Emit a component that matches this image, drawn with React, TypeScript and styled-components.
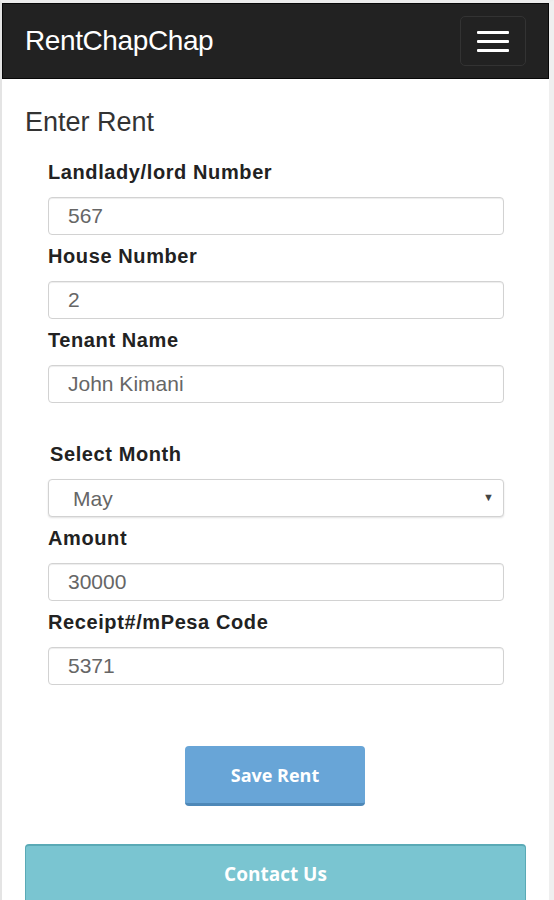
import styled, { createGlobalStyle } from "styled-components";

const GlobalStyle = createGlobalStyle`
  html, body {
    margin: 0;
    padding: 0;
    background: #ffffff;
  }
  * {
    box-sizing: border-box;
  }
`;

const fields = [
  { label: "Landlady/lord Number", value: "567" },
  { label: "House Number", value: "2" },
  { label: "Tenant Name", value: "John Kimani" },
];

const moreFields = [
  { label: "Amount", value: "30000" },
  { label: "Receipt#/mPesa Code", value: "5371" },
];

const App = () => {
  return (
    <Page>
      <GlobalStyle />
      <Navbar>
        <Brand>RentChapChap</Brand>
        <Toggle aria-label="menu">
          <Bar />
          <Bar />
          <Bar />
        </Toggle>
      </Navbar>
      <Main>
        <Heading>Enter Rent</Heading>
        <Form>
          {fields.map((f) => (
            <Field key={f.label}>
              <Label>{f.label}</Label>
              <Input defaultValue={f.value} />
            </Field>
          ))}
          <Field $spaced>
            <Label $shift>Select Month</Label>
            <SelectWrap>
              <Select defaultValue="May">
                <option>January</option>
                <option>February</option>
                <option>March</option>
                <option>April</option>
                <option>May</option>
                <option>June</option>
              </Select>
              <Arrow>▼</Arrow>
            </SelectWrap>
          </Field>
          {moreFields.map((f) => (
            <Field key={f.label}>
              <Label>{f.label}</Label>
              <Input defaultValue={f.value} />
            </Field>
          ))}
          <Actions>
            <SaveButton type="button">Save Rent</SaveButton>
          </Actions>
        </Form>
        <ContactButton type="button">Contact Us</ContactButton>
      </Main>
    </Page>
  );
};

const Page = styled.div`
  height: 900px;
  overflow: hidden;
  border-top: 3px solid #ececec;
  border-left: 2px solid #e4e4e4;
  border-right: 5px solid #efefef;
  font-family: "Liberation Sans", Arial, sans-serif;
  color: #333;
`;

const Navbar = styled.div`
  display: flex;
  align-items: center;
  justify-content: space-between;
  height: 76px;
  padding: 0 22px 0 22px;
  background: #222222;
  border: 1px solid #080808;
`;

const Brand = styled.div`
  font-size: 28px;
  color: #ffffff;
  letter-spacing: -0.4px;
`;

const Toggle = styled.button`
  display: flex;
  flex-direction: column;
  justify-content: center;
  gap: 6px;
  width: 66px;
  height: 50px;
  padding: 0 16px;
  background: transparent;
  border: 1px solid #333;
  border-radius: 5px;
`;

const Bar = styled.span`
  display: block;
  height: 3px;
  background: #ffffff;
  border-radius: 1px;
`;

const Main = styled.div`
  padding: 28px 21px 0 23px;
`;

const Heading = styled.h2`
  margin: 0 0 22px;
  font-size: 27px;
  font-weight: normal;
  color: #333;
  line-height: 30px;
`;

const Form = styled.form`
  padding: 0 24px 0 23px;
`;

const Field = styled.div<{ $spaced?: boolean }>`
  margin-top: ${(p) => (p.$spaced ? "38px" : "0")};
  margin-bottom: 8px;
`;

const Label = styled.label<{ $shift?: boolean }>`
  display: block;
  margin: 0 0 12px ${(p) => (p.$shift ? "2px" : "0")};
  font-size: 20px;
  font-weight: bold;
  letter-spacing: 0.6px;
  line-height: 26px;
  color: #222;
`;

const Input = styled.input`
  display: block;
  width: 100%;
  height: 38px;
  padding: 0 19px;
  font-family: "Liberation Sans", Arial, sans-serif;
  font-size: 21px;
  color: #666;
  background: #fff;
  border: 1px solid #d2d2d2;
  border-radius: 4px;
  box-shadow: inset 0 1px 1px rgba(0, 0, 0, 0.075);
  outline: none;
`;

const SelectWrap = styled.div`
  position: relative;
`;

const Select = styled.select`
  display: block;
  width: 100%;
  height: 38px;
  padding: 0 24px;
  font-family: "Liberation Sans", Arial, sans-serif;
  font-size: 21px;
  color: #666;
  background: #fff;
  border: 1px solid #d2d2d2;
  border-radius: 4px;
  box-shadow: 0 1px 2px rgba(0, 0, 0, 0.12);
  appearance: none;
  outline: none;
`;

const Arrow = styled.span`
  position: absolute;
  right: 10px;
  top: 12px;
  font-size: 11px;
  color: #444;
  pointer-events: none;
`;

const Actions = styled.div`
  display: flex;
  justify-content: center;
  margin-top: 61px;
`;

const SaveButton = styled.button`
  width: 180px;
  height: 60px;
  margin-left: -2px;
  font-family: "Open Sans", sans-serif;
  font-size: 18px;
  font-weight: 700;
  color: #fff;
  background: #68a5d7;
  border: none;
  border-bottom: 3px solid #4e88b8;
  border-radius: 4px;
`;

const ContactButton = styled.button`
  display: block;
  width: 501px;
  height: 70px;
  margin-top: 38px;
  padding-bottom: 14px;
  font-family: "Open Sans", sans-serif;
  font-size: 19px;
  font-weight: 700;
  color: #fff;
  background: #7ac5d1;
  border: none;
  border-top: 2px solid #5aaab6;
  border-left: 1px solid #5aaab6;
  border-right: 1px solid #5aaab6;
  border-radius: 4px 4px 0 0;
`;

export default App;
